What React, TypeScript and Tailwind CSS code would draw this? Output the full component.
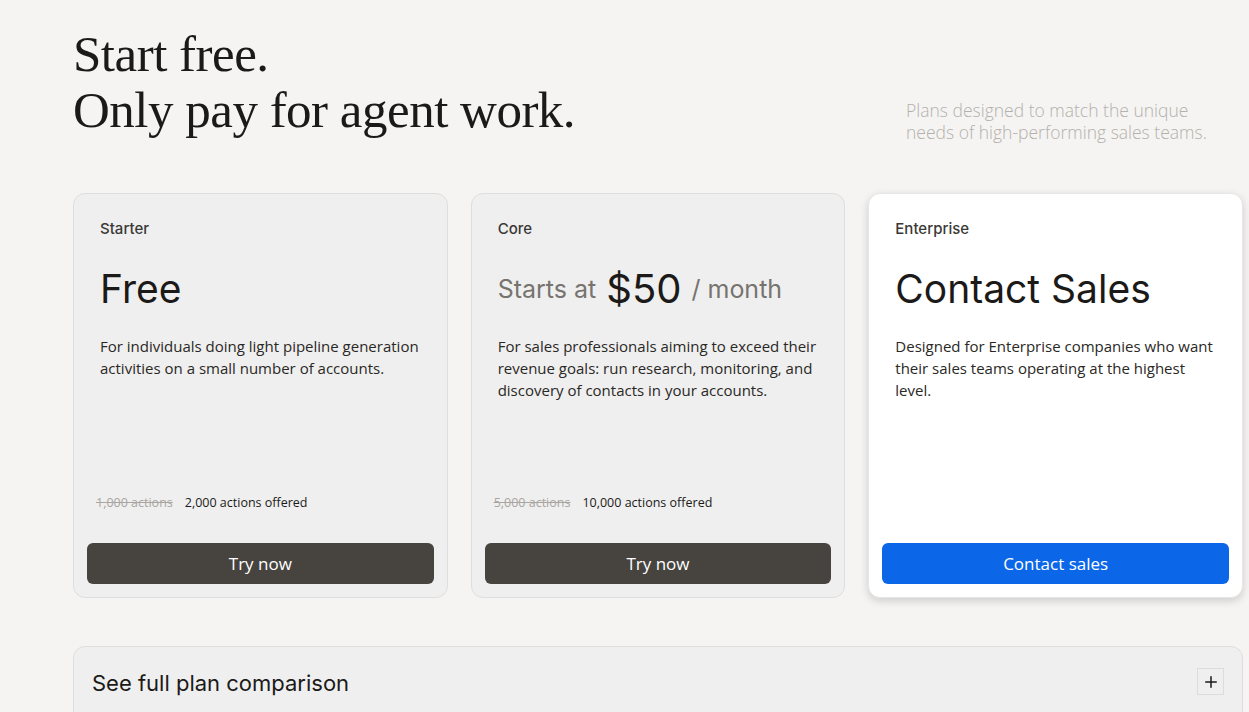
import { Plus } from 'lucide-react'

const plans = [
  {
    name: 'Starter',
    price: 'free',
    desc: 'For individuals doing light pipeline generation activities on a small number of accounts.',
    oldActions: '1,000 actions',
    actions: '2,000 actions offered',
    cta: 'Try now',
  },
  {
    name: 'Core',
    price: 'core',
    desc: 'For sales professionals aiming to exceed their revenue goals: run research, monitoring, and discovery of contacts in your accounts.',
    oldActions: '5,000 actions',
    actions: '10,000 actions offered',
    cta: 'Try now',
  },
  {
    name: 'Enterprise',
    price: 'enterprise',
    desc: 'Designed for Enterprise companies who want their sales teams operating at the highest level.',
    cta: 'Contact sales',
  },
]

const sans = { fontFamily: 'Inter, "Liberation Sans", sans-serif' }
const body = { fontFamily: '"Open Sans", "Noto Sans", sans-serif' }

function Price({ kind }: { kind: string }) {
  if (kind === 'free') {
    return <div className="text-[39px] leading-[48px] text-[#1b1a18]">Free</div>
  }
  if (kind === 'core') {
    return (
      <div className="flex h-[48px] items-center gap-[10px] leading-none">
        <span className="text-[25px] text-[#77746f]">Starts at</span>
        <span className="text-[40px] text-[#1b1a18]">$50</span>
        <span className="text-[25px] text-[#77746f]">/ month</span>
      </div>
    )
  }
  return <div className="text-[39px] leading-[48px] text-[#1b1a18]">Contact Sales</div>
}

export default function App() {
  return (
    <div className="min-h-screen bg-[#f5f4f2] pl-[73px] pr-[6px] pt-[26px] overflow-hidden">
      {/* Header */}
      <div className="flex items-end justify-between">
        <h1
          className="text-[51px] leading-[56px] text-[#1b1a18] font-normal tracking-[-0.5px]"
          style={{ fontFamily: '"Liberation Serif", serif' }}
        >
          Start free.
          <br />
          Only pay for agent work.
        </h1>
        <p
          className="w-[337px] pr-[20px] text-[17.5px] leading-[22px] font-light text-[#b4b1ad] -mb-[5px]"
          style={body}
        >
          Plans designed to match the unique needs of high-performing sales teams.
        </p>
      </div>

      {/* Plans */}
      <div className="mt-[55px] grid grid-cols-3 gap-[23px]">
        {plans.map((plan) => {
          const enterprise = plan.price === 'enterprise'
          return (
            <div
              key={plan.name}
              className={`flex h-[405px] flex-col rounded-[12px] border p-[13px] ${
                enterprise
                  ? 'bg-white border-[#e6e6e6] shadow-[0_3px_8px_rgba(0,0,0,0.16)]'
                  : 'bg-[#efefef] border-[#dedede]'
              }`}
            >
              <div className="px-[13px] pt-[12px]" style={sans}>
                <div className="text-[15px] leading-[20px] font-medium text-[#3a3835]">{plan.name}</div>
                <div className="mt-[26px]">
                  <Price kind={plan.price} />
                </div>
              </div>
              <p
                className="mt-[22px] px-[13px] text-[15px] leading-[22px] text-[#2a2825]"
                style={body}
              >
                {plan.desc}
              </p>
              {plan.actions ? (
                <div className="mt-auto flex gap-[12px] px-[9px] text-[12.5px] leading-[20px]" style={body}>
                  <span className="text-[#a9a6a2] line-through">{plan.oldActions}</span>
                  <span className="text-[#1b1a18]">{plan.actions}</span>
                </div>
              ) : (
                <div className="mt-auto" />
              )}
              <button
                className={`mt-[30px] h-[41px] w-full rounded-[6px] text-[17px] font-medium text-white ${
                  enterprise ? 'bg-[#0b66e8]' : 'bg-[#47443f]'
                }`}
                style={body}
              >
                {plan.cta}
              </button>
            </div>
          )
        })}
      </div>

      {/* Comparison */}
      <div className="mt-[48px] flex h-[80px] items-start justify-between rounded-t-[12px] border border-[#dedede] bg-[#efefef] pl-[18px] pr-[18px] pt-[22px]">
        <span className="text-[22px] leading-[28px] text-[#1b1a18]" style={sans}>
          See full plan comparison
        </span>
        <span className="-mt-[1px] flex h-[27px] w-[27px] items-center justify-center border border-[#dcdcdc]">
          <Plus className="h-[18px] w-[18px] text-[#1b1a18]" strokeWidth={2} />
        </span>
      </div>
    </div>
  )
}
